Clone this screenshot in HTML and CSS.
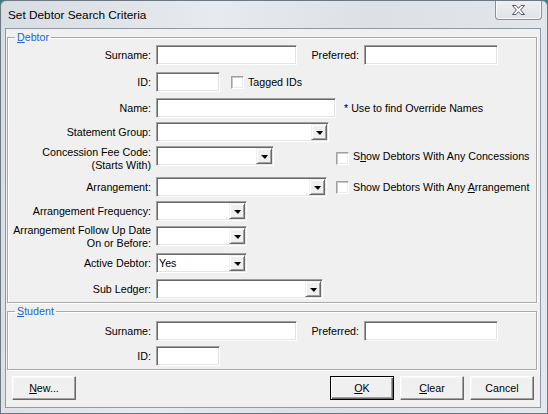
FILE: index.html
```html
<!DOCTYPE html>
<html lang="en">
<head>
    <meta charset="UTF-8">
    <meta name="viewport" content="width=device-width, initial-scale=1.0">
    <title>Set Debtor Search Criteria</title>
    <link rel="stylesheet" href="styles.css">
</head>
<body>
<div class="window">
    <div class="titlebar">
        <span class="title">Set Debtor Search Criteria</span>
        <button type="button" class="close-button" title="Close">
            <svg width="13" height="10" viewBox="0 0 13 10">
                <polygon points="0.5,0.5 4,0.5 6.5,3.3 9,0.5 12.5,0.5 8.6,5 12.5,9.5 9,9.5 6.5,6.7 4,9.5 0.5,9.5 4.4,5" fill="#fff" stroke="#50575f" stroke-width="1"/>
            </svg>
        </button>
    </div>

    <form class="client" id="searchForm">
        <fieldset class="group group-debtor">
            <legend><u>D</u>ebtor</legend>

            <div class="row r-surname">
                <label class="lbl" for="debtorSurname">Surname:</label>
                <input type="text" id="debtorSurname" class="field w-surname">
                <label class="lbl lbl-pref" for="debtorPreferred">Preferred:</label>
                <input type="text" id="debtorPreferred" class="field w-pref">
            </div>

            <div class="row r-id">
                <label class="lbl" for="debtorId">ID:</label>
                <input type="text" id="debtorId" class="field w-id">
                <span class="check check-tagged"></span>
                <span class="check-text">Tagged IDs</span>
            </div>

            <div class="row r-name">
                <label class="lbl" for="debtorName">Name:</label>
                <input type="text" id="debtorName" class="field w-name">
                <span class="note">* Use to find Override Names</span>
            </div>

            <div class="row r-statement">
                <span class="lbl">Statement Group:</span>
                <div class="combo w-statement"><span class="combo-value"></span><span class="combo-btn"></span></div>
            </div>

            <div class="row row-tall r-concession">
                <span class="lbl lbl-two">Concession Fee Code:<br>(Starts With)</span>
                <div class="combo w-concession"><span class="combo-value"></span><span class="combo-btn"></span></div>
                <span class="check check-concession"></span>
                <span class="check-text check-text-concession">S<u>h</u>ow Debtors With Any Concessions</span>
            </div>

            <div class="row r-arrangement">
                <span class="lbl">Arrangement:</span>
                <div class="combo w-arrangement"><span class="combo-value"></span><span class="combo-btn"></span></div>
                <span class="check check-arrangement"></span>
                <span class="check-text">Show Debtors With Any <u>A</u>rrangement</span>
            </div>

            <div class="row r-frequency">
                <span class="lbl">Arrangement Frequency:</span>
                <div class="combo w-small"><span class="combo-value"></span><span class="combo-btn"></span></div>
            </div>

            <div class="row row-tall r-followup">
                <span class="lbl lbl-two">Arrangement Follow Up Date<br>On or Before:</span>
                <div class="combo w-small combo-followup"><span class="combo-value"></span><span class="combo-btn"></span></div>
            </div>

            <div class="row r-active">
                <span class="lbl">Active Debtor:</span>
                <div class="combo w-small"><span class="combo-value">Yes</span><span class="combo-btn"></span></div>
            </div>

            <div class="row r-ledger">
                <span class="lbl">Sub Ledger:</span>
                <div class="combo w-ledger"><span class="combo-value"></span><span class="combo-btn"></span></div>
            </div>
        </fieldset>

        <fieldset class="group group-student">
            <legend><u>S</u>tudent</legend>

            <div class="row r-surname">
                <label class="lbl" for="studentSurname">Surname:</label>
                <input type="text" id="studentSurname" class="field w-surname">
                <label class="lbl lbl-pref" for="studentPreferred">Preferred:</label>
                <input type="text" id="studentPreferred" class="field w-pref">
            </div>

            <div class="row r-student-id">
                <label class="lbl" for="studentId">ID:</label>
                <input type="text" id="studentId" class="field w-id">
            </div>
        </fieldset>

        <div class="button-bar">
            <button type="button" class="button button-new"><u>N</u>ew...</button>
            <div class="button-group">
                <button type="submit" class="button button-default"><u>O</u>K</button>
                <button type="reset" class="button"><u>C</u>lear</button>
                <button type="button" class="button">Cancel</button>
            </div>
        </div>
    </form>
</div>
</body>
</html>
```

FILE: styles.css
```css
body {
    margin: 0;
    padding: 0;
    background-color: #3d7d84;
    font-family: "Liberation Sans", Arial, sans-serif;
    font-size: 10.7px;
    color: #000;
}

.window {
    width: 548px;
    height: 414px;
    box-sizing: border-box;
    border: 1px solid #6e7882;
    border-radius: 6px 6px 0 0;
    background: linear-gradient(100deg, #d8dde3 0%, #e7eaee 35%, #dde1e6 60%, #e4e7eb 100%);
    overflow: hidden;
}

/* title bar */
.titlebar {
    position: relative;
    height: 27px;
}

.title {
    position: absolute;
    left: 7px;
    top: 7px;
    font-size: 11.8px;
    line-height: 15px;
    color: #000;
}

.close-button {
    position: absolute;
    right: 5px;
    top: -1px;
    width: 47px;
    height: 20px;
    padding: 0;
    border: 1px solid #8a9098;
    border-top: none;
    border-radius: 0 0 4px 4px;
    background: linear-gradient(#eef0f2, #dfe2e6);
    box-shadow: inset 0 0 0 1px rgba(255, 255, 255, 0.7);
    display: flex;
    align-items: center;
    justify-content: center;
}

/* client area */
.client {
    box-sizing: border-box;
    height: 380px;
    margin: 0 6px 0 4px;
    border: 1px solid #8f99a4;
    background-color: #f0f0f0;
    display: flex;
    flex-direction: column;
}

.group {
    margin: 2px 3px 0 1px;
    padding: 0 0 3px 0;
    min-width: 0;
    border: 1px solid #a9a9a9;
    box-shadow: inset 1px 1px 0 #fff, 1px 1px 0 #fff;
}

.group legend {
    margin-left: 7px;
    padding: 0 2px;
    line-height: 13px;
    color: #1a66d0;
}

.row {
    display: flex;
    align-items: center;
    height: 20px;
}

.row-tall {
    align-items: flex-start;
}

.lbl {
    flex-shrink: 0;
    width: 143px;
    margin-right: 5px;
    text-align: right;
    white-space: nowrap;
}

.lbl-two {
    line-height: 13px;
}

.lbl-pref {
    width: 62px;
}

/* row spacing */
.r-surname { margin-top: 1px; }
.r-id { margin-top: 7px; }
.r-name { margin-top: 6px; }
.r-statement { margin-top: 4px; }
.r-concession { margin-top: 4px; height: 27px; }
.r-arrangement { margin-top: 4px; }
.r-frequency { margin-top: 4px; }
.r-followup { margin-top: 3px; height: 26px; }
.r-active { margin-top: 3px; }
.r-ledger { margin-top: 6px; }
.group-student .r-surname { margin-top: 3px; }
.r-student-id { margin-top: 5px; }

/* sunken text boxes */
.field,
.combo {
    box-sizing: border-box;
    height: 20px;
    margin: 0;
    padding: 0 3px;
    background-color: #fff;
    border: 1px solid;
    border-color: #a0a0a0 #fff #fff #a0a0a0;
    box-shadow: inset 1px 1px 0 #696969, inset -1px -1px 0 #e3e3e3;
    font: inherit;
    outline: none;
}

.w-surname { width: 141px; }
.w-pref { width: 134px; }
.w-id { width: 64px; }
.w-name { width: 180px; }
.w-statement { width: 173px; }
.w-concession { width: 118px; }
.w-arrangement { width: 171px; }
.w-small { width: 91px; }
.w-ledger { width: 167px; }

.combo {
    position: relative;
    padding: 0 0 0 2px;
    display: flex;
    align-items: center;
    flex-shrink: 0;
}

.combo-followup {
    margin-top: 2px;
}

.combo-value {
    flex: 1;
    line-height: 16px;
}

.combo-btn {
    width: 16px;
    height: 16px;
    margin-right: 1px;
    box-sizing: border-box;
    background-color: #f0f0f0;
    border: 1px solid;
    border-color: #f0f0f0 #696969 #696969 #f0f0f0;
    box-shadow: inset 1px 1px 0 #fff, inset -1px -1px 0 #a0a0a0;
    display: flex;
    align-items: center;
    justify-content: center;
}

.combo-btn::after {
    content: "";
    width: 0;
    height: 0;
    margin-top: 1px;
    border-left: 4px solid transparent;
    border-right: 3px solid transparent;
    border-top: 4px solid #000;
}

/* check boxes */
.check {
    flex-shrink: 0;
    width: 13px;
    height: 13px;
    box-sizing: border-box;
    background-color: #fff;
    border: 1px solid;
    border-color: #a0a0a0 #fff #fff #a0a0a0;
    box-shadow: inset 1px 1px 0 #c8c8c8, inset -1px -1px 0 #ececec;
}

.check-tagged { margin-left: 11px; }
.check-concession { margin: 6px 0 0 62px; }
.check-arrangement { margin-left: 9px; }

.check-text {
    margin-left: 4px;
    white-space: nowrap;
}

.check-text-concession {
    margin-top: 4px;
}

.note {
    margin-left: 8px;
    white-space: nowrap;
}

/* buttons */
.button-bar {
    display: flex;
    margin-top: 6px;
    padding: 0 6px 0 6px;
}

.button-group {
    display: flex;
    gap: 6px;
    margin-left: auto;
}

.button {
    box-sizing: border-box;
    width: 64px;
    height: 24px;
    padding: 0;
    font: inherit;
    color: #000;
    background-color: #f0f0f0;
    border: 1px solid;
    border-color: #fff #696969 #696969 #fff;
    box-shadow: inset -1px -1px 0 #a0a0a0, inset 1px 1px 0 #f6f6f6;
}

.button-default {
    border: 1px solid #000;
    box-shadow: inset 1px 1px 0 #fff, inset -1px -1px 0 #696969, inset -2px -2px 0 #a0a0a0;
}
```
